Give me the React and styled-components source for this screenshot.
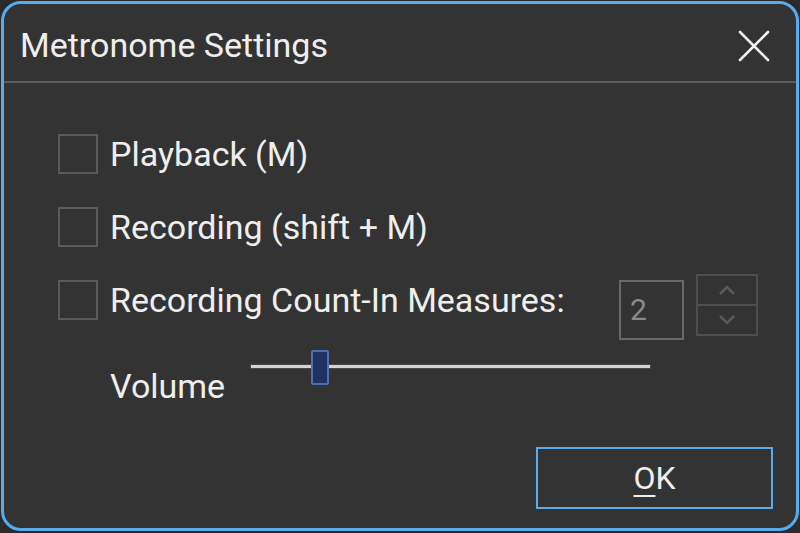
import React from "react"
import styled, { createGlobalStyle } from "styled-components"

const Global = createGlobalStyle`
  html, body {
    margin: 0;
    padding: 0;
    background: #2b2b2b;
    font-family: Roboto, "Liberation Sans", sans-serif;
  }
`

const Window = styled.div`
  box-sizing: border-box;
  width: 798px;
  height: 530px;
  margin: 1px 0 0 1px;
  border: 3px solid #56acef;
  border-radius: 20px;
  background: #333333;
  display: flex;
  flex-direction: column;
  overflow: hidden;
  color: #eeeeee;
`

const Header = styled.div`
  height: 77px;
  display: flex;
  align-items: center;
  justify-content: space-between;
  padding: 0 26px 0 16px;
  border-bottom: 2px solid #5c5c5c;
`

const Title = styled.div`
  font-size: 34px;
  padding-top: 4px;
`

const Close = styled.button`
  background: none;
  border: none;
  padding: 0;
  width: 32px;
  height: 32px;
  cursor: pointer;
  margin-top: 6px;
`

const Body = styled.div`
  flex: 1;
  display: flex;
  flex-direction: column;
  padding: 51px 38px 0 54px;
`

const Row = styled.div`
  display: flex;
  align-items: center;
  height: 40px;
  margin-bottom: ${p => p.gap ?? 33}px;
`

const Box = styled.span`
  box-sizing: border-box;
  width: 40px;
  height: 40px;
  border: 2px solid #5a5a5a;
  margin-right: 12px;
  flex-shrink: 0;
`

const Label = styled.span`
  font-size: 34px;
  white-space: nowrap;
`

const VolumeLabel = styled(Label)`
  margin-top: 13px;
`

const Spacer = styled.div`
  flex: 1;
`

const NumBox = styled.div`
  box-sizing: border-box;
  width: 65px;
  height: 60px;
  border: 2px solid #686868;
  color: #8a8a8a;
  font-size: 30px;
  display: flex;
  align-items: center;
  padding-left: 9px;
  margin-top: 19px;
`

const Spinner = styled.div`
  box-sizing: border-box;
  width: 62px;
  height: 62px;
  margin-left: 12px;
  margin-top: 9px;
  border: 2px solid #4e4e4e;
  display: flex;
  flex-direction: column;
`

const SpinButton = styled.div`
  flex: 1;
  display: flex;
  align-items: center;
  justify-content: center;
  & + & {
    border-top: 2px solid #4e4e4e;
  }
`

const VolumeRow = styled.div`
  display: flex;
  align-items: flex-start;
  padding-left: 52px;
  margin-top: 33px;
`

const Slider = styled.div`
  position: relative;
  width: 399px;
  height: 36px;
  margin-left: 26px;
  margin-top: -3px;
`

const Track = styled.div`
  position: absolute;
  left: 0;
  right: 0;
  top: 15px;
  height: 3px;
  background: #d6d2ce;
  box-shadow: 0 0 0 1px #474747;
`

const Thumb = styled.div`
  position: absolute;
  top: 0;
  box-sizing: border-box;
  width: 18px;
  height: 35px;
  background: #1e3263;
  border: 2px solid #4f6fae;
  border-radius: 2px;
`

const Footer = styled.div`
  margin-top: auto;
  display: flex;
  justify-content: flex-end;
  padding: 0 23px 19px 0;
`

const OkButton = styled.button`
  box-sizing: border-box;
  width: 237px;
  height: 62px;
  background: #333333;
  border: 2px solid #56acef;
  color: #eeeeee;
  font-family: inherit;
  font-size: 32px;
  padding: 0;
  cursor: pointer;
  u {
    text-decoration-thickness: 2px;
    text-underline-offset: 6px;
  }
`

const Chevron = ({ up }) => (
  <svg width="18" height="10" viewBox="0 0 18 10">
    <path
      d={up ? "M2 9 L9 2 L16 9" : "M2 1 L9 8 L16 1"}
      fill="none"
      stroke="#5a5a5a"
      strokeWidth="2.5"
    />
  </svg>
)

export default function App() {
  return (
    <>
      <Global />
      <Window>
        <Header>
          <Title>Metronome Settings</Title>
          <Close aria-label="close">
            <svg width="32" height="32" viewBox="0 0 32 32">
              <path d="M2 2 L30 30 M30 2 L2 30" stroke="#f2f2f2" strokeWidth="2.6" strokeLinecap="round" />
            </svg>
          </Close>
        </Header>
        <Body>
          <Row>
            <Box />
            <Label>Playback (M)</Label>
          </Row>
          <Row>
            <Box />
            <Label>Recording (shift + M)</Label>
          </Row>
          <Row gap={0}>
            <Box />
            <Label>Recording Count-In Measures:</Label>
            <Spacer />
            <NumBox>2</NumBox>
            <Spinner>
              <SpinButton><Chevron up /></SpinButton>
              <SpinButton><Chevron /></SpinButton>
            </Spinner>
          </Row>
          <VolumeRow>
            <VolumeLabel>Volume</VolumeLabel>
            <Slider>
              <Track />
              <Thumb style={{ left: 60 }} />
            </Slider>
          </VolumeRow>
        </Body>
        <Footer>
          <OkButton><u>O</u>K</OkButton>
        </Footer>
      </Window>
    </>
  )
}
